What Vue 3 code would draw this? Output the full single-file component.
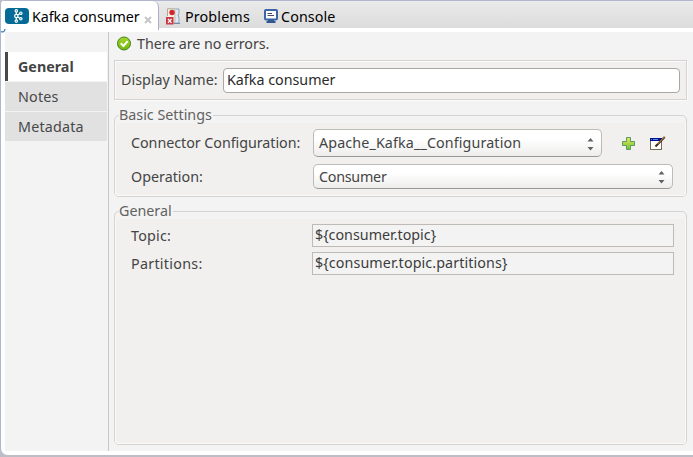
<script setup>
import { ref } from 'vue'

const sections = [
  { name: 'General', cls: 't-general' },
  { name: 'Notes', cls: 't-notes' },
  { name: 'Metadata', cls: 't-meta' },
]
const active = ref('General')
</script>

<template>
  <div class="view">
    <header class="tabs">
      <div class="tab active">
        <svg class="kafka" width="24" height="16" viewBox="0 0 24 16">
          <rect width="24" height="16" rx="4" fill="#056b96" />
          <g fill="none" stroke="#fff" stroke-width="1.2">
            <path d="M11.3 3.5V12.5M12.3 7.2L15.5 5.3M12.3 8.8L15.5 10.7" />
            <circle cx="11.3" cy="2.9" r="1.2" fill="#056b96" />
            <circle cx="11.3" cy="8" r="1.7" fill="#056b96" />
            <circle cx="11.3" cy="13.1" r="1.2" fill="#056b96" />
            <circle cx="15.8" cy="5.2" r="1.2" fill="#056b96" />
            <circle cx="15.8" cy="10.8" r="1.2" fill="#056b96" />
          </g>
        </svg>
        <span class="label t-kafka">Kafka consumer</span>
        <svg class="close" width="8" height="8" viewBox="0 0 8 8"><path d="M1 1L7 7M7 1L1 7" stroke="#c5c5c5" stroke-width="2" /></svg>
      </div>
      <div class="tab problems">
        <svg width="16" height="17" viewBox="0 0 16 17">
          <path d="M1.5 8V.8H9V15H6" fill="#f5f3e4" stroke="#a9ab95" />
          <path d="M9.500 1h3.500v4l-1 2 1 3v5H9.500" fill="#dfe9f3" stroke="#8ba3bc" />
          <path d="M8 15.5h6" stroke="#6d8cab" />
          <circle cx="6" cy="4.5" r="2.7" fill="#d8232d" />
          <rect y="9" width="7.500" height="7.500" fill="#cc3846" />
          <path d="M2 11L5.500 14.8M5.500 11L2 14.8" stroke="#fff" stroke-width="1.2" />
        </svg>
        <span class="label t-problems">Problems</span>
      </div>
      <div class="tab console">
        <svg width="14" height="14" viewBox="0 0 14 14">
          <rect x="1" y="1" width="12" height="9.5" rx="1" fill="#fff" stroke="#3b65a4" stroke-width="2" />
          <path d="M3.5 4.5H8M3.5 6.5H10" stroke="#464e67" />
          <path d="M4 10.5h6v1.5h1.5V14h-9v-2H4z" fill="#315991" />
        </svg>
        <span class="label t-console">Console</span>
      </div>
    </header>
    <svg class="hook" width="6" height="4" viewBox="0 0 6 4"><path d="M0 1.5C2 4 5 3 5 0" fill="none" stroke="#3c7fb5" stroke-width="1.3" /></svg>

    <div class="body">
      <nav class="side">
        <button
          v-for="s in sections"
          :key="s.name"
          class="item"
          :class="{ selected: active === s.name }"
          @click="active = s.name"
        ><span :class="s.cls">{{ s.name }}</span></button>
      </nav>

      <main class="main">
        <div class="status">
          <svg width="16" height="16" viewBox="0 0 16 16">
            <defs>
              <linearGradient id="ok" x1="0" y1="0" x2="0" y2="1">
                <stop offset="0" stop-color="#a6d52b" /><stop offset="1" stop-color="#72b80b" />
              </linearGradient>
            </defs>
            <circle cx="7" cy="7.5" r="6.5" fill="url(#ok)" stroke="#3d8018" />
            <path d="M3.8 7.2L6.500 10L10.7 5.2" fill="none" stroke="#fff" stroke-width="2" />
          </svg>
          <span class="t-status">There are no errors.</span>
        </div>

        <div class="name-box">
          <span class="name-label">Display Name:</span>
          <div class="name-input">Kafka consumer</div>
        </div>

        <fieldset class="group basic">
          <legend>Basic Settings</legend>
          <div class="inner">
            <div class="row first">
              <span class="key t-conn">Connector Configuration:</span>
              <div class="select short">
                <span class="t-apache">Apache_Kafka__Configuration</span>
                <svg width="7" height="13" viewBox="0 0 7 13"><path d="M.5 3.5L3.5 0L6.5 3.5zM.5 9L3.5 12.5L6.5 9z" fill="#626262" /></svg>
              </div>
              <svg class="plus" width="13" height="13" viewBox="0 0 13 13">
                <defs>
                  <linearGradient id="pl" x1="0" y1="0" x2="0" y2="1">
                    <stop offset="0" stop-color="#e4e85c" /><stop offset="1" stop-color="#72c32e" />
                  </linearGradient>
                </defs>
                <path d="M4.5.5h4v4h4v4h-4v4h-4v-4h-4v-4h4z" fill="url(#pl)" stroke="#5b9a62" />
              </svg>
              <svg class="edit" width="16" height="14" viewBox="0 0 16 14">
                <rect x=".5" y="2.5" width="11" height="11" fill="#fff" stroke="#737052" />
                <rect y="2" width="12" height="3" fill="#00108c" />
                <path d="M1 3.5h1M3 3.5h5" stroke="#5b8ae0" />
                <path d="M5.5 10.5L14.7 1" stroke="#402b20" stroke-width="2" />
                <path d="M7.5 8L14.5 .8" stroke="#d99a50" />
              </svg>
            </div>
            <div class="row second">
              <span class="key">Operation:</span>
              <div class="select long">
                <span class="t-consumer">Consumer</span>
                <svg width="7" height="13" viewBox="0 0 7 13"><path d="M.5 3.5L3.5 0L6.5 3.5zM.5 9L3.5 12.5L6.5 9z" fill="#626262" /></svg>
              </div>
            </div>
          </div>
        </fieldset>

        <fieldset class="group general">
          <legend>General</legend>
          <div class="inner">
            <div class="row field">
              <span class="key t-topic">Topic:</span>
              <div class="readonly">${consumer.topic}</div>
            </div>
            <div class="row field">
              <span class="key t-part">Partitions:</span>
              <div class="readonly t-vpart">${consumer.topic.partitions}</div>
            </div>
          </div>
        </fieldset>
      </main>
    </div>
  </div>
</template>

<style>
body { background: #bdbdc5; overflow: hidden; }
</style>

<style scoped>
* { box-sizing: border-box; }
.view {
  position: relative;
  width: 693px;
  height: 455px;
  background: #fff;
  border-left: 1px solid #b1b6d0;
  border-radius: 5px 0 0 7px;
  font: 14.3px/18px "Noto Sans", "Open Sans", sans-serif;
  color: #444;
  white-space: nowrap;
  overflow: hidden;
}
.tabs {
  display: flex;
  height: 28px;
  border-top: 1px solid #b3b5ca;
  background: linear-gradient(#eaeaea, #dcdcdc);
  color: #000;
}
.tab { display: flex; align-items: center; height: 29px; padding-bottom: 1px; }
.tab.active {
  width: 158px;
  height: 29px;
  padding-left: 4px;
  background: #fff;
  border-right: 1px solid #a9aecb;
  border-radius: 0 6px 0 0;
}
.kafka { margin-top: 2px; }
.label { margin: 3px 0 0 3px; }
.tab.active .label { width: 108px; }
.close { margin: 9px 0 0 4px; }
.problems { width: 98px; padding-left: 7px; }
.problems svg { margin-top: 3px; }
.console { padding-left: 7px; }
.console svg { margin-top: 2px; }
.hook { position: absolute; left: -1px; top: 29px; }
.body { display: flex; height: 419px; margin: 4px 0 0 4px; background: #f3f3f3; }
.side { display: flex; flex-direction: column; gap: 1px; width: 104px; padding: 20px 1px 0 0; border-right: 1px solid #c8c8c8; }
.item {
  height: 29px;
  padding: 0 0 0 13px;
  border: 0;
  background: #e1e1e1;
  color: #484848;
  font: inherit;
  text-align: left;
}
.item.selected { border-left: 3px solid #484848; padding-left: 10px; background: #fff; font-weight: bold; color: #444; }
.main { flex: 1; padding-left: 5px; }
.status { display: flex; align-items: center; gap: 4px; height: 24px; padding-left: 3px; }
.status svg { margin-bottom: 1px; }
.name-box {
  display: flex;
  align-items: center;
  width: 573px;
  height: 40px;
  margin-top: 4px;
  padding-left: 6px;
  background: #f1f0ee;
  border: 1px solid #d5d3d1;
  box-shadow: inset 1px 1px #fbfbfb, 1px 1px #fbfbfb;
}
.name-label { width: 102px; }
.name-input {
  width: 457px;
  height: 25px;
  margin-top: 1px;
  padding: 2px 0 0 3px;
  border: 1px solid #aaa7a2;
  border-radius: 4px;
  background: #fff;
  color: #2b2b2b;
}
.group {
  width: 573px;
  min-width: 0;
  margin: 0;
  padding: 0;
  border: 1px solid #d5d3d1;
  border-radius: 5px;
}
.basic { height: 90px; margin-top: 7px; }
.general { height: 242px; margin-top: 6px; }
legend { height: 16px; margin-left: 4px; padding: 0 1px 0 0; line-height: 16px; color: #626262; }
.inner { height: 73px; padding-top: 6px; background: #f1f0ee; border: 1px solid #fafafa; border-top: 0; border-radius: 0 0 4px 4px; }
.general .inner { height: 225px; padding-top: 5px; }
.row { display: flex; align-items: center; padding-left: 15px; }
.key { width: 182px; }
.first { height: 28px; }
.second { height: 25px; margin-top: 7px; }
.select {
  display: flex;
  align-items: center;
  justify-content: space-between;
  height: 100%;
  padding: 0 7px 0 5px;
  border: 1px solid #bdbbb8;
  border-bottom-color: #9a9893;
  border-radius: 5px;
  background: linear-gradient(#fff 35%, #eeedec);
}
.short { width: 289px; }
.long { width: 360px; }
.select svg { margin-top: 2px; }
.plus { margin-left: 20px; }
.edit { margin-left: 15px; margin-bottom: 1px; }
.field { height: 23px; margin-bottom: 5px; }
.field .key { width: 181px; }
.readonly { width: 362px; height: 23px; padding: 1px 0 0 2px; border: 1px solid #bebbb7; background: #f3f3f3; color: #3c3c3c; }
.t-kafka { letter-spacing: -0.07px; }
.t-problems { letter-spacing: 0.15px; }
.t-console { letter-spacing: 0.1px; }
.t-notes { letter-spacing: 0.2px; }
.t-meta { letter-spacing: 0.2px; }
.t-status { letter-spacing: -0.07px; }
.t-conn { letter-spacing: -0.04px; }
.t-apache { letter-spacing: 0.12px; }
.t-consumer { letter-spacing: -0.25px; }
.t-topic { letter-spacing: 0.2px; }
.t-part { letter-spacing: 0.28px; }
.t-vpart { letter-spacing: 0.1px; }
</style>
